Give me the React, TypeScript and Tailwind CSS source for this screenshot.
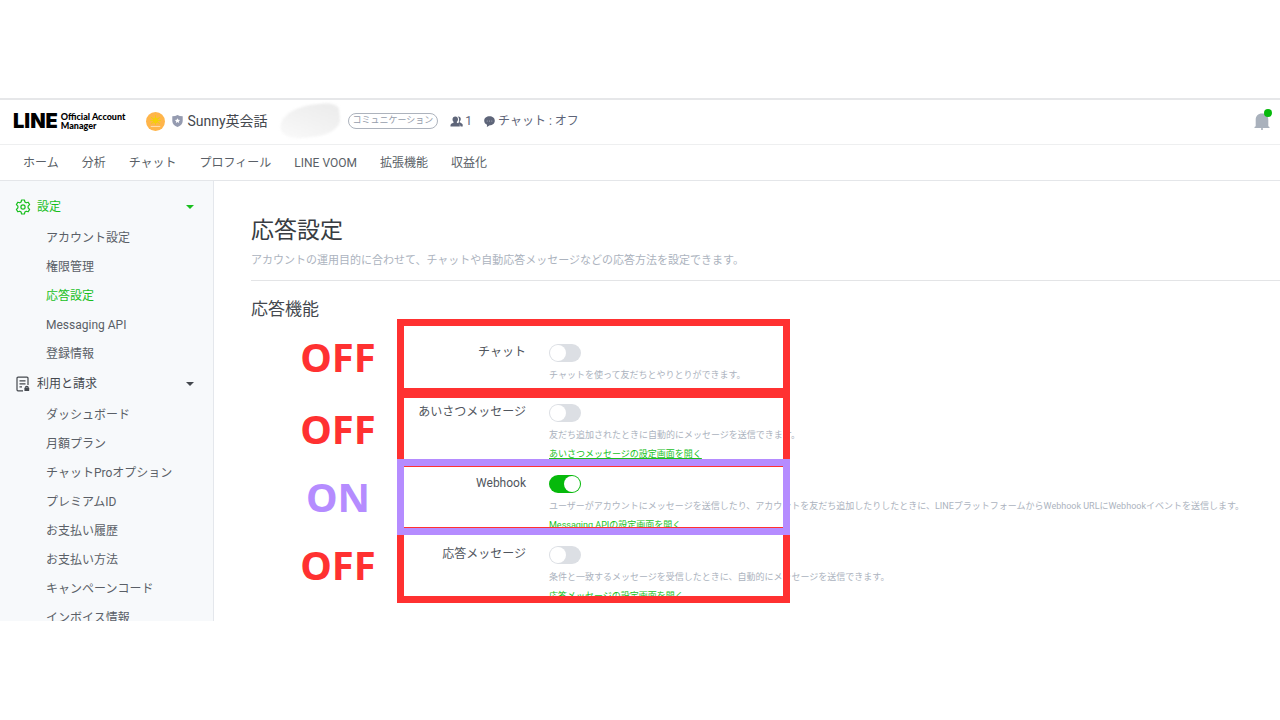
import clsx from 'clsx';

const NAV = ['ホーム', '分析', 'チャット', 'プロフィール', 'LINE VOOM', '拡張機能', '収益化'];

const SIDEBAR = [
  {
    title: '設定',
    icon: GearIcon,
    active: true,
    items: ['アカウント設定', '権限管理', '応答設定', 'Messaging API', '登録情報'],
  },
  {
    title: '利用と請求',
    icon: BillIcon,
    active: false,
    items: [
      'ダッシュボード',
      '月額プラン',
      'チャットProオプション',
      'プレミアムID',
      'お支払い履歴',
      'お支払い方法',
      'キャンペーンコード',
      'インボイス情報',
    ],
  },
];

const SETTINGS = [
  { id: 'chat', label: 'チャット', on: false, text: 'チャットを使って友だちとやりとりができます。', link: '' },
  {
    id: 'greeting',
    label: 'あいさつメッセージ',
    on: false,
    text: '友だち追加されたときに自動的にメッセージを送信できます。',
    link: 'あいさつメッセージの設定画面を開く',
  },
  {
    id: 'webhook',
    label: 'Webhook',
    on: true,
    text: 'ユーザーがアカウントにメッセージを送信したり、アカウントを友だち追加したりしたときに、LINEプラットフォームからWebhook URLにWebhookイベントを送信します。',
    link: 'Messaging APIの設定画面を開く',
  },
  {
    id: 'reply',
    label: '応答メッセージ',
    on: false,
    text: '条件と一致するメッセージを受信したときに、自動的にメッセージを送信できます。',
    link: '応答メッセージの設定画面を開く',
  },
];

// Callout frames drawn over the settings; the ON frame comes last so it stays on top
const CALLOUTS = [
  { text: 'OFF', style: 'top-[138px] border-[#ff3131] text-[#ff3131]' },
  { text: 'OFF', style: 'top-[210px] border-[#ff3131] text-[#ff3131]' },
  { text: 'OFF', style: 'top-[346px] border-[#ff3131] text-[#ff3131]' },
  { text: 'ON', style: 'top-[278px] border-[#b58cff] text-[#b58cff]' },
];

function GearIcon() {
  return (
    <svg viewBox="0 0 16 16" className="size-4" fill="none" stroke="currentColor" strokeWidth="1.2" strokeLinejoin="round">
      <path d="M6.6 1h2.8l.5 2 1.3.8 2-.6 1.4 2.4-1.5 1.5v1.8l1.5 1.5-1.4 2.4-2-.6-1.3.8-.5 2H6.600l-.5-2-1.300-.8-2 .6-1.400-2.400 1.500-1.500V7.100L1.400 5.600l1.400-2.400 2 .6L6.100 3z" />
      <circle cx="8" cy="8" r="2.100" />
    </svg>
  );
}

function BillIcon() {
  return (
    <svg viewBox="0 0 16 16" className="size-4" fill="none" stroke="currentColor" strokeWidth="1.2">
      <path d="M13 9V2.200a1 1 0 0 0-1-1H3a1 1 0 0 0-1 1v11.600a1 1 0 0 0 1 1h5M4.500 4.800h6M4.500 7.800h6M4.500 10.800h2.500" />
      <path d="M10.400 11.800a1.400 1.400 0 0 1 2.800 0" />
      <rect x="9.400" y="11.600" width="4.800" height="3.400" rx=".6" fill="currentColor" stroke="none" />
    </svg>
  );
}

function SunAvatar() {
  return (
    <svg viewBox="0 0 18 18" className="size-[19px] shrink-0">
      <circle cx="9" cy="9" r="9" fill="#ffb54a" />
      <path d="M9 3v9M4.800 5l8.400 6M13.200 5l-8.400 6M4 8h10" stroke="#f0d010" strokeWidth="1" />
      <circle cx="9" cy="8" r="2.400" fill="#f5cf08" />
      <path d="M4.500 13.700h9" stroke="#ffdca6" strokeWidth="1" />
    </svg>
  );
}

function ShieldIcon() {
  return (
    <svg viewBox="0 0 11 12" className="h-3 w-[11px] shrink-0">
      <path d="M.3 1.200Q3.500 1.200 5.500 0 7.500 1.200 10.700 1.200V6c0 3-2.200 4.800-5.200 6C2.500 10.800.3 9 .3 6z" fill="#959bb0" />
      <path d="m5.500 3.200.8 1.600 1.800.2-1.300 1.200.3 1.800-1.600-.9L3.900 8l.3-1.800L2.900 5l1.800-.2z" fill="#fff" />
    </svg>
  );
}

function FriendsIcon() {
  return (
    <svg viewBox="0 0 13 11" className="h-[11px] w-[13px]" fill="currentColor">
      <path d="M8.200.4c1.700 0 2.600 1.100 2.600 2.600 0 1.200-.5 2-1.100 2.500v.7c.2.500 2.600.9 3 2.200v2.100h-2.100c-.3-1.500-1.300-2.200-2.700-2.800.8-.9 1.200-2 1.200-3.200C9.100 2.200 8.600 1.200 7.600.5z" />
      <path d="M5.300.4c1.700 0 2.700 1.200 2.700 2.800 0 1.200-.5 2.100-1.200 2.600v.7c.2.500 2.800.9 3 2.500v1.500H.5V9c.2-1.600 2.900-2 3.100-2.500v-.7c-.7-.5-1.100-1.400-1.100-2.600C2.500 1.600 3.600.4 5.300.4z" />
    </svg>
  );
}

function BubbleIcon() {
  return (
    <svg viewBox="0 0 11 11" className="size-[11px]" fill="currentColor">
      <path d="M5.500.3C8.500.3 10.800 2 10.800 4.800S8.500 9.200 5.800 9.300L2.900 10.900 3 8.800C1.300 8.100.2 6.700.2 4.800.2 2 2.600.3 5.500.3z" />
      <g fill="#b9bdca">
        <circle cx="3.200" cy="4.900" r=".5" />
        <circle cx="5.500" cy="4.900" r=".5" />
        <circle cx="7.800" cy="4.900" r=".5" />
      </g>
    </svg>
  );
}

function BellIcon() {
  return (
    <svg viewBox="0 0 16 17" className="h-[17px] w-4" fill="#a9b1bc">
      <path d="M8 .5c4 0 6.300 2.600 6.300 6.300v6.400l1.200.8v1H.5v-1l1.200-.8V6.800C1.700 3.100 4 .5 8 .5zM7.200 15h1.600v2H7.200z" />
    </svg>
  );
}

function Header() {
  return (
    <header className="flex h-[45px] shrink-0 items-center border-b border-[#eeeff0] pr-[10px] pb-[2px] pl-[13px] text-[#5e6579]">
      <a href="#" className="flex items-center gap-[3px] text-black">
        <span className="font-[Inter,sans-serif] text-[20px] leading-5 font-black">LINE</span>
        <span className="font-[Lato,sans-serif] text-[9px] leading-[9px] font-black">
          Official Account
          <br />
          Manager
        </span>
      </a>
      <div className="ml-[21px] flex items-center gap-[7px]">
        <SunAvatar />
        <ShieldIcon />
      </div>
      <span className="ml-1 text-[14px] text-[#44484e]">Sunny英会話</span>
      <span className="ml-3 h-[32px] w-[60px] -rotate-6 rounded-[60%_25%_45%_35%] bg-linear-to-tr from-[#fafafa] via-[#f2f2f2] to-[#ebebeb] blur-[1px]" />
      <span className="ml-2 flex h-4 items-center rounded-full border border-[#adb3bd] px-1 text-[9px] text-[#969dab]">
        コミュニケーション
      </span>
      <span className="ml-3 flex items-center gap-[2px] text-[12px]">
        <FriendsIcon />1
      </span>
      <span className="ml-3 flex items-center gap-[3px] text-[12px]">
        <BubbleIcon />
        チャット : オフ
      </span>
      <button type="button" aria-label="通知" className="relative ml-auto">
        <BellIcon />
        <span className="absolute -top-1 -right-[2px] size-2 rounded-full bg-[#06b90b]" />
      </button>
    </header>
  );
}

function Sidebar() {
  return (
    <aside className="w-[214px] shrink-0 overflow-hidden border-r border-[#e4e7ec] bg-[#f7f9fb] pt-[10px]">
      {SIDEBAR.map(({ title, icon: Icon, active, items }) => (
        <section key={title}>
          <button
            type="button"
            className={clsx(
              'flex h-8 w-full items-center pr-[19px] pl-[15px]',
              active ? 'text-[#19bf1e]' : 'text-[#44484e]',
            )}
          >
            <Icon />
            <span className="ml-[6px]">{title}</span>
            <svg viewBox="0 0 8 4" className="ml-auto h-1 w-2" fill="currentColor">
              <path d="M0 0h8L4 4z" />
            </svg>
          </button>
          <ul>
            {items.map((item) => (
              <li key={item} className="flex h-[29px] items-center pl-[46px]">
                <a href="#" className={item === '応答設定' ? 'text-[#19bf1e]' : 'text-[#5a5f67]'}>
                  {item}
                </a>
              </li>
            ))}
          </ul>
        </section>
      ))}
    </aside>
  );
}

function Settings() {
  return (
    <main className="relative min-w-0 flex-1 overflow-hidden pt-8 pl-[37px]">
      <h1 className="text-[23px] leading-9 text-[#383c42]">応答設定</h1>
      <p className="mt-[2px] pb-[9px] text-[11px] leading-5 text-[#acb3be]">
        アカウントの運用目的に合わせて、チャットや自動応答メッセージなどの応答方法を設定できます。
      </p>
      <h2 className="border-t border-[#e3e4e6] pt-4 text-[17px] leading-6 text-[#44484e]">応答機能</h2>

      <div className="mt-[23px] flex flex-col gap-[11px]">
        {SETTINGS.map(({ id, label, on, text, link }) => (
          <div key={id} className="flex min-h-[49px] gap-[23px]">
            <label htmlFor={id} className="w-[275px] shrink-0 text-right leading-4 text-[#50555d]">
              {label}
            </label>
            <div className="text-[9px] leading-[19px] whitespace-nowrap">
              <input
                id={id}
                type="checkbox"
                role="switch"
                defaultChecked={on}
                className="mb-1 block h-[18px] w-8 appearance-none rounded-full bg-[#dcdfe4] p-px before:block before:size-4 before:rounded-full before:bg-white checked:bg-[#06b90b] checked:before:ml-[14px]"
              />
              <p className="text-[#acb3be]">{text}</p>
              {link && (
                <a href="#" className="block text-[#19bf1e] underline">
                  {link}
                </a>
              )}
            </div>
          </div>
        ))}
      </div>

      {CALLOUTS.map(({ text, style }) => (
        <div
          key={style}
          className={clsx('pointer-events-none absolute left-[183px] h-[76px] w-[393px] border-[7px]', style)}
        >
          <div className="absolute inset-y-0 right-full mr-[7px] flex w-[118px] items-center justify-center font-['Noto_Sans',sans-serif] text-[40px] leading-none font-bold">
            {text}
          </div>
        </div>
      ))}
    </main>
  );
}

export default function App() {
  return (
    <div className="flex h-screen flex-col bg-white pt-[98px] pb-[99px] font-[Roboto,'Noto_Sans_CJK_JP',sans-serif] text-[12px]">
      <div className="flex min-h-0 flex-1 flex-col border-t-2 border-[#e6e7e9]">
        <Header />
        <nav className="flex h-9 shrink-0 items-center gap-[23px] border-b border-[#e4e6e9] pl-[23px] text-[#5a5f67]">
          {NAV.map((item) => (
            <a key={item} href="#">
              {item}
            </a>
          ))}
        </nav>
        <div className="flex min-h-0 flex-1">
          <Sidebar />
          <Settings />
        </div>
      </div>
    </div>
  );
}
